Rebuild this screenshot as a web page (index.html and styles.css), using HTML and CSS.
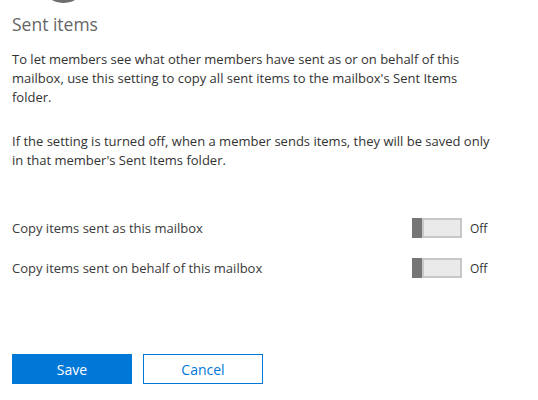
FILE: index.html
```html
<!DOCTYPE html>
<html>
<head>
<meta charset="utf-8">
<link rel="stylesheet" href="styles.css">
</head>
<body>
<div class="page">
  <div class="avatar"></div>
  <h1 class="title">Sent items</h1>
  <p class="para">To let members see what other members have sent as or on behalf of this mailbox, use this setting to copy all sent items to the mailbox's Sent Items folder.</p>
  <p class="para">If the setting is turned off, when a member sends items, they will be saved only in that member's Sent Items folder.</p>
  <div class="settings">
    <div class="row">
      <span class="label">Copy items sent as this mailbox</span>
      <span class="toggle"><span class="knob"></span><span class="track"></span></span>
      <span class="state">Off</span>
    </div>
    <div class="row">
      <span class="label">Copy items sent on behalf of this mailbox</span>
      <span class="toggle"><span class="knob"></span><span class="track"></span></span>
      <span class="state">Off</span>
    </div>
  </div>
  <div class="actions">
    <button class="btn primary">Save</button>
    <button class="btn secondary">Cancel</button>
  </div>
</div>
</body>
</html>
```
FILE: styles.css
```css
html, body {
  margin: 0;
  padding: 0;
  background: #fff;
}
body {
  font-family: "Open Sans", "Noto Sans", sans-serif;
  color: #333;
  overflow: hidden;
}
.page {
  padding: 0 12px;
  width: 484px;
}
.avatar {
  width: 47px;
  height: 47px;
  border-radius: 50%;
  background: #6e6e6e;
  margin: -44px 0 0 28px;
}
.title {
  margin: 9px 0 0 0;
  font-size: 17.5px;
  font-weight: 400;
  color: #666;
  line-height: 24px;
}
.para {
  font-size: 13px;
  line-height: 19px;
  margin: 14px 0 0 0;
}
.para + .para {
  margin-top: 25px;
}
.settings {
  margin-top: 48px;
  display: flex;
  flex-direction: column;
  gap: 20px;
}
.row {
  display: flex;
  align-items: center;
  height: 20px;
  font-size: 13px;
}
.label {
  width: 400px;
  color: #3a3a3a;
}
.toggle {
  display: flex;
  width: 50px;
  height: 20px;
}
.knob {
  width: 10px;
  height: 20px;
  background: #767676;
}
.track {
  flex: 1;
  border: 2px solid #c8c8c8;
  background: #eaeaea;
}
.state {
  margin-left: 8px;
  font-size: 12px;
}
.actions {
  margin-top: 76px;
  display: flex;
  gap: 11px;
}
.btn {
  width: 120px;
  height: 30px;
  font-family: inherit;
  font-size: 14px;
  border: 1px solid #0078d7;
  padding: 0;
}
.primary {
  background: #0078d7;
  color: #fff;
}
.secondary {
  background: #fff;
  color: #0078d7;
}
```
